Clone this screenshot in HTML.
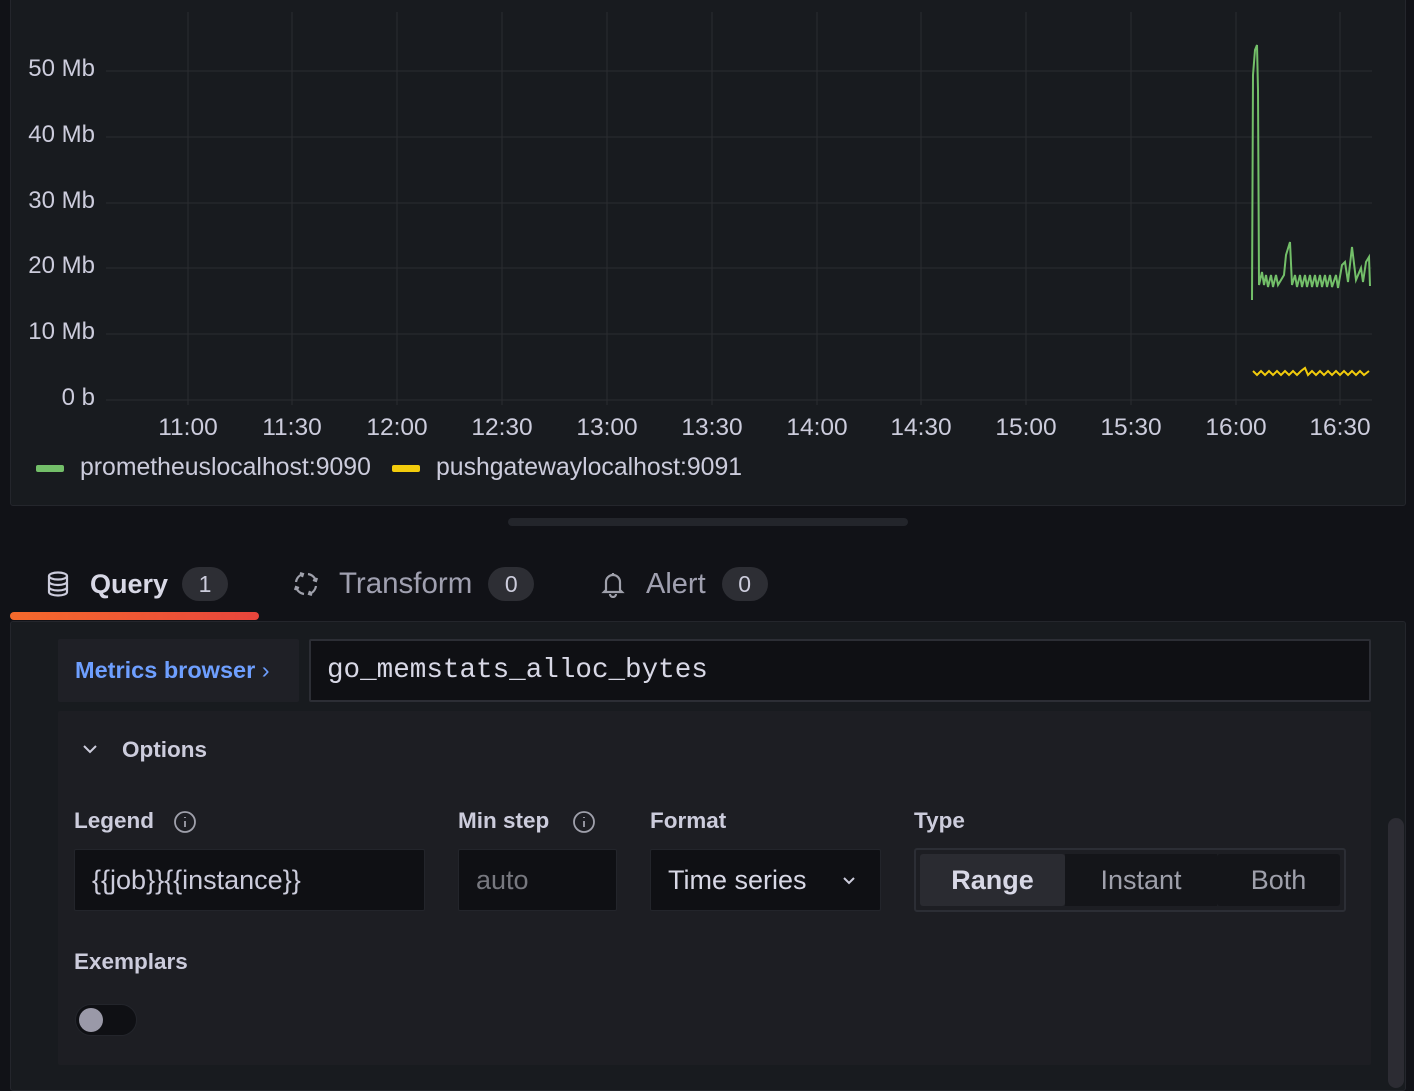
<!DOCTYPE html>
<html><head><meta charset="utf-8"><style>
*{box-sizing:border-box;margin:0;padding:0}
body{width:1414px;height:1080px;background:#111217;font-family:"Liberation Sans",sans-serif;color:#ccccdc;position:relative;overflow:hidden}
.abs{position:absolute}
.panel{left:10px;top:-4px;width:1396px;height:510px;background:#181b1f;border:1px solid #24262c;border-radius:3px}
.yl{position:absolute;right:1319px;font-size:24px;line-height:22px;text-align:right}
.xl{position:absolute;top:415px;font-size:24.5px;line-height:26px;transform:translateX(-50%)}
.tab{position:absolute;top:566px;font-size:28px;line-height:36px;display:flex;align-items:center}
.badge{display:inline-block;background:#2d2e34;border-radius:17px;height:34px;min-width:46px;text-align:center;font-size:23px;line-height:34px;margin-left:16px;color:#ccccdc}
.lbl{position:absolute;font-size:22.5px;font-weight:bold;color:#ccccdc}
.inp{position:absolute;background:#0f1014;border:1px solid #23252b;border-radius:2px;font-size:27px;line-height:60px;padding-left:17px}
</style></head><body>
<div class="abs panel"></div>
<svg class="abs" style="left:0;top:0" width="1414" height="500">
<g stroke="#2a2c31" stroke-width="1">
<line x1="106" y1="71" x2="1372" y2="71"/><line x1="106" y1="137" x2="1372" y2="137"/><line x1="106" y1="203" x2="1372" y2="203"/><line x1="106" y1="268" x2="1372" y2="268"/><line x1="106" y1="334" x2="1372" y2="334"/><line x1="106" y1="400" x2="1372" y2="400"/>
<line x1="188" y1="12" x2="188" y2="405"/><line x1="292" y1="12" x2="292" y2="405"/><line x1="397" y1="12" x2="397" y2="405"/><line x1="502" y1="12" x2="502" y2="405"/><line x1="607" y1="12" x2="607" y2="405"/><line x1="712" y1="12" x2="712" y2="405"/><line x1="817" y1="12" x2="817" y2="405"/><line x1="921" y1="12" x2="921" y2="405"/><line x1="1026" y1="12" x2="1026" y2="405"/><line x1="1131" y1="12" x2="1131" y2="405"/><line x1="1236" y1="12" x2="1236" y2="405"/><line x1="1340" y1="12" x2="1340" y2="405"/>
</g>
<polyline fill="none" stroke="#73bf69" stroke-width="2" points="1252,300 1253,75 1255,50 1257,45 1258,90 1259,285 1262,272 1264,285 1266,275 1268,287 1271,275 1273,287 1276,275 1278,285 1284,275 1286,255 1290,242 1292,285 1295,275 1297,287 1300,275 1302,287 1305,275 1307,287 1310,275 1312,287 1315,275 1317,287 1320,275 1322,287 1325,275 1327,287 1330,275 1332,287 1336,275 1338,288 1342,265 1345,262 1348,282 1352,247 1356,280 1361,268 1363,282 1366,262 1369,257 1370,286"/>
<polyline fill="none" stroke="#f2cc0c" stroke-width="2" points="1253,371 1257,375 1261,371 1265,375 1269,371 1273,375 1277,371 1281,375 1285,371 1289,375 1293,371 1297,375 1301,371 1305,368 1308,375 1312,371 1316,375 1320,371 1324,375 1328,371 1332,375 1336,371 1340,375 1344,371 1348,375 1352,371 1356,375 1360,371 1364,375 1369,371"/>
<rect x="36" y="465" width="28" height="7" rx="2" fill="#73bf69"/>
<rect x="392" y="465" width="28" height="7" rx="2" fill="#f2cc0c"/>
</svg>
<div class="yl" style="top:58px">50 Mb</div><div class="yl" style="top:124px">40 Mb</div><div class="yl" style="top:190px">30 Mb</div><div class="yl" style="top:255px">20 Mb</div><div class="yl" style="top:321px">10 Mb</div><div class="yl" style="top:387px">0 b</div>
<div class="xl" style="left:188px">11:00</div><div class="xl" style="left:292px">11:30</div><div class="xl" style="left:397px">12:00</div><div class="xl" style="left:502px">12:30</div><div class="xl" style="left:607px">13:00</div><div class="xl" style="left:712px">13:30</div><div class="xl" style="left:817px">14:00</div><div class="xl" style="left:921px">14:30</div><div class="xl" style="left:1026px">15:00</div><div class="xl" style="left:1131px">15:30</div><div class="xl" style="left:1236px">16:00</div><div class="xl" style="left:1340px">16:30</div>
<div class="abs" style="left:80px;top:454px;font-size:24.8px">prometheuslocalhost:9090</div>
<div class="abs" style="left:436px;top:454px;font-size:24.8px">pushgatewaylocalhost:9091</div>
<div class="abs" style="left:508px;top:518px;width:400px;height:8px;border-radius:4px;background:#23252b"></div>

<div class="tab" style="left:46px"><svg width="24" height="28" viewBox="0 0 24 28" fill="none" stroke="#ccccdc" stroke-width="2.2"><ellipse cx="12" cy="6" rx="9" ry="3.5"/><path d="M3 6v16c0 2 4 3.5 9 3.5s9-1.5 9-3.5V6M3 11.5c0 2 4 3.5 9 3.5s9-1.5 9-3.5M3 17c0 2 4 3.5 9 3.5s9-1.5 9-3.5"/></svg><span style="margin-left:20px;font-weight:bold;color:#d8d8e6;font-size:27px">Query</span><span class="badge" style="margin-left:14px">1</span></div>
<div class="tab" style="left:292px;color:#a0a0b0"><svg width="28" height="28" viewBox="0 0 28 28" fill="none" stroke="#9fa0ab" stroke-width="2.2"><path d="M4 12a10 10 0 0 1 7-8M8 3l3 1-1 3M24 16a10 10 0 0 1-7 8M20 25l-3-1 1-3M16 4a10 10 0 0 1 8 7M25 8l-1 3-3-1M12 24a10 10 0 0 1-8-7M3 20l1-3 3 1"/></svg><span style="margin-left:19px;font-size:29.5px">Transform</span><span class="badge">0</span></div>
<div class="tab" style="left:600px;color:#a0a0b0"><svg width="26" height="28" viewBox="0 0 26 28" fill="none" stroke="#9fa0ab" stroke-width="2.2"><path d="M13 3v2M6 20v-8a7 7 0 0 1 14 0v8l2 2H4zM10 24a3 3 0 0 0 6 0"/></svg><span style="margin-left:20px;font-size:29px">Alert</span><span class="badge">0</span></div>
<div class="abs" style="left:10px;top:612px;width:249px;height:8px;border-radius:4px;background:linear-gradient(90deg,#f66a2c,#e8453c)"></div>

<div class="abs" style="left:10px;top:621px;width:1396px;height:470px;background:#181b1f;border:1px solid #24262c;border-radius:3px"></div>
<div class="abs" style="left:58px;top:639px;width:241px;height:63px;background:#1f2026;border-radius:2px;color:#6e9fff;font-size:23.5px;font-weight:bold;line-height:63px;padding-left:17px">Metrics browser <span style="font-weight:normal">›</span></div>
<div class="abs" style="left:309px;top:639px;width:1062px;height:63px;background:#0f1014;border:2px solid #2c2e35;border-radius:2px;font-family:'Liberation Mono',monospace;font-size:27.6px;line-height:59px;padding-left:16px;color:#d8d8e6">go_memstats_alloc_bytes</div>
<div class="abs" style="left:58px;top:711px;width:1313px;height:354px;background:#1d1e23;border-radius:2px"></div>
<svg class="abs" style="left:82px;top:743px" width="16" height="12" viewBox="0 0 16 12" fill="none" stroke="#ccccdc" stroke-width="2"><path d="M2 3l6 6 6-6"/></svg>
<div class="lbl" style="left:122px;top:737px">Options</div>
<div class="lbl" style="left:74px;top:808px">Legend</div>
<svg class="abs" style="left:173px;top:810px" width="24" height="24" viewBox="0 0 24 24" fill="none" stroke="#9fa0ab" stroke-width="1.8"><circle cx="12" cy="12" r="10"/><path d="M12 11v6M12 7v1"/></svg>
<div class="lbl" style="left:458px;top:808px">Min step</div>
<svg class="abs" style="left:572px;top:810px" width="24" height="24" viewBox="0 0 24 24" fill="none" stroke="#9fa0ab" stroke-width="1.8"><circle cx="12" cy="12" r="10"/><path d="M12 11v6M12 7v1"/></svg>
<div class="lbl" style="left:650px;top:808px">Format</div>
<div class="lbl" style="left:914px;top:808px">Type</div>
<div class="inp" style="left:74px;top:849px;width:351px;height:62px">{{job}}{{instance}}</div>
<div class="inp" style="left:458px;top:849px;width:159px;height:62px;color:#77787f">auto</div>
<div class="inp" style="left:650px;top:849px;width:231px;height:62px;color:#d8d8e6">Time series<svg style="position:absolute;right:24px;top:26px" width="14" height="10" viewBox="0 0 14 10" fill="none" stroke="#ccccdc" stroke-width="2"><path d="M2 2l5 5 5-5"/></svg></div>
<div class="abs" style="left:914px;top:848px;width:432px;height:64px;border:2px solid #2c2e35;border-radius:3px;background:#1d1e23"></div>
<div class="abs" style="left:920px;top:854px;width:145px;height:52px;background:#2a2b31;border-radius:3px;text-align:center;font-size:27px;font-weight:bold;line-height:52px;color:#d8d8e6">Range</div>
<div class="abs" style="left:1065px;top:854px;width:152px;height:52px;background:#141519;text-align:center;font-size:27px;line-height:52px;color:#9fa0ab">Instant</div>
<div class="abs" style="left:1217px;top:854px;width:123px;height:52px;background:#141519;border-radius:3px;text-align:center;font-size:27px;line-height:52px;color:#9fa0ab">Both</div>
<div class="lbl" style="left:74px;top:949px">Exemplars</div>
<div class="abs" style="left:75px;top:1004px;width:62px;height:32px;border-radius:16px;background:#0f1014;border:1px solid #23252b"></div>
<div class="abs" style="left:79px;top:1008px;width:24px;height:24px;border-radius:12px;background:#9a99a8"></div>
<div class="abs" style="left:1388px;top:818px;width:16px;height:270px;border-radius:8px;background:#2c2c33"></div>
</body></html>
